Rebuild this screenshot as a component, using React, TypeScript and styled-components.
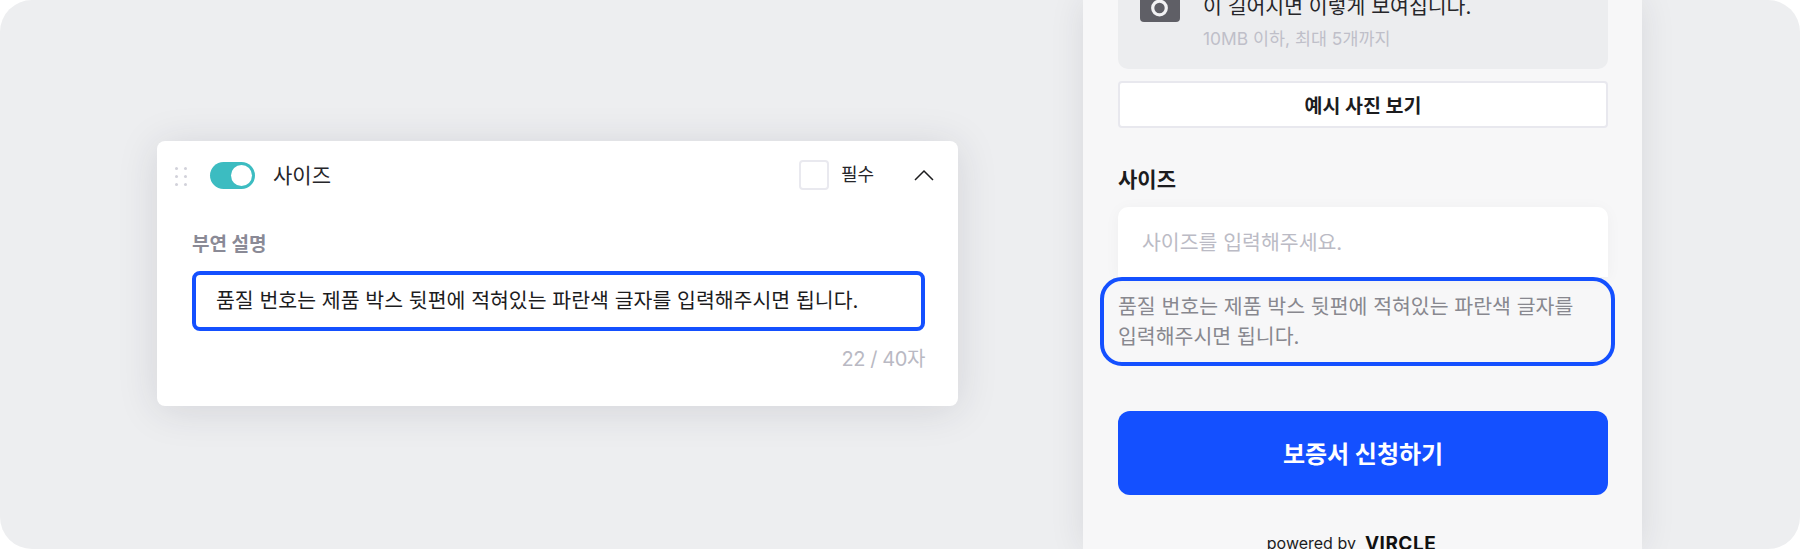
import React from 'react'
import styled, { createGlobalStyle } from 'styled-components'

const GlobalStyle = createGlobalStyle`
  html, body {
    margin: 0;
    padding: 0;
    background: #ffffff;
  }
  * {
    box-sizing: border-box;
  }
  body {
    font-family: Inter, "Noto Sans CJK KR", sans-serif;
    color: #1c1c1e;
  }
`

const dots = [
  [1.5, 1.5],
  [10.5, 1.5],
  [1.5, 9.5],
  [10.5, 9.5],
  [1.5, 17.5],
  [10.5, 17.5],
]

const App = () => {
  return (
    <>
      <GlobalStyle />
      <Stage>
        <Card>
          <CardHeader>
            <DragHandle width="12" height="19" viewBox="0 0 12 19">
              {dots.map(([cx, cy], index) => (
                <circle key={index} cx={cx} cy={cy} r="1.5" fill="#d2d2da" />
              ))}
            </DragHandle>
            <Toggle>
              <Knob />
            </Toggle>
            <FieldName>사이즈</FieldName>
            <Checkbox />
            <RequiredLabel>필수</RequiredLabel>
            <Chevron width="20" height="12" viewBox="0 0 20 12">
              <path d="M1 11 L10 2 L19 11" fill="none" stroke="#1c1c1e" strokeWidth="1.5" />
            </Chevron>
          </CardHeader>
          <CardBody>
            <SubLabel>부연 설명</SubLabel>
            <DescriptionInput>품질 번호는 제품 박스 뒷편에 적혀있는 파란색 글자를 입력해주시면 됩니다.</DescriptionInput>
            <Counter>22 / 40자</Counter>
          </CardBody>
        </Card>

        <Phone>
          <UploadBox>
            <CameraIcon width="40" height="40" viewBox="0 0 40 40">
              <rect x="0" y="0" width="40" height="40" rx="4" fill="#5f5f66" />
              <circle cx="19.5" cy="26" r="6.8" fill="none" stroke="#f2f2f4" strokeWidth="3.2" />
            </CameraIcon>
            <UploadText>
              <UploadTitle>이 길어지면 이렇게 보여집니다.</UploadTitle>
              <UploadHint>10MB 이하, 최대 5개까지</UploadHint>
            </UploadText>
          </UploadBox>
          <ExampleButton>예시 사진 보기</ExampleButton>
          <SectionTitle>사이즈</SectionTitle>
          <SizeInput>사이즈를 입력해주세요.</SizeInput>
          <HelperBox>품질 번호는 제품 박스 뒷편에 적혀있는 파란색 글자를 입력해주시면 됩니다.</HelperBox>
          <SubmitButton>보증서 신청하기</SubmitButton>
          <Footer>
            <PoweredBy>powered by</PoweredBy>
            <Brand>VIRCLE</Brand>
          </Footer>
        </Phone>
      </Stage>
    </>
  )
}

export default App

const Stage = styled.div`
  display: flex;
  align-items: flex-start;
  width: 1800px;
  height: 549px;
  padding-left: 157px;
  background: #edeef0;
  border-radius: 32px;
  overflow: hidden;
`

const Card = styled.section`
  width: 801px;
  height: 265px;
  margin-top: 141px;
  background: #ffffff;
  border-radius: 8px;
  box-shadow: 0 4px 40px rgba(40, 40, 60, 0.13);
`

const CardHeader = styled.div`
  display: flex;
  align-items: center;
  height: 68px;
  padding: 0 24px 0 18px;
`

const DragHandle = styled.svg`
  flex: none;
  margin-top: 2px;
`

const Toggle = styled.div`
  display: flex;
  align-items: center;
  justify-content: flex-end;
  width: 45px;
  height: 27px;
  margin-left: 23px;
  padding-right: 3px;
  background: #3cbcc1;
  border-radius: 14px;
`

const Knob = styled.span`
  width: 21px;
  height: 21px;
  background: #ffffff;
  border-radius: 50%;
`

const FieldName = styled.span`
  margin-left: 18px;
  margin-right: auto;
  padding-top: 1px;
  font-size: 21px;
  line-height: 28px;
  color: #26262a;
`

const Checkbox = styled.span`
  width: 30px;
  height: 30px;
  background: #ffffff;
  border: 2px solid #e9e9ef;
  border-radius: 4px;
`

const RequiredLabel = styled.span`
  margin-left: 12px;
  font-size: 18px;
  line-height: 24px;
  color: #26262a;
`

const Chevron = styled.svg`
  margin-left: 40px;
`

const CardBody = styled.div`
  padding: 24px 33px 0 35px;
`

const SubLabel = styled.div`
  font-size: 19px;
  font-weight: 700;
  line-height: 24px;
  color: #8a8a96;
`

const DescriptionInput = styled.div`
  display: flex;
  align-items: center;
  height: 60px;
  margin-top: 14px;
  padding: 0 0 4px 20px;
  background: #ffffff;
  border: 4px solid #1450ff;
  border-radius: 8px;
  font-size: 20.5px;
  color: #1c1c1e;
  white-space: nowrap;
`

const Counter = styled.div`
  margin-top: 14px;
  font-size: 20px;
  line-height: 28px;
  letter-spacing: -0.4px;
  text-align: right;
  color: #b9b9c3;
`

const Phone = styled.main`
  display: flex;
  flex-direction: column;
  flex: none;
  width: 559px;
  height: 549px;
  margin-left: 125px;
  padding: 0 34px 0 35px;
  background: #f7f7f8;
  box-shadow: 0 0 32px rgba(40, 40, 60, 0.1);
`

const UploadBox = styled.div`
  display: flex;
  align-items: flex-end;
  height: 69px;
  flex: none;
  padding: 0 0 18px 22px;
  background: #ecedef;
  border-radius: 0 0 10px 10px;
  overflow: hidden;
`

const CameraIcon = styled.svg`
  flex: none;
  margin-bottom: 29px;
`

const UploadText = styled.div`
  margin-left: 23px;
`

const UploadTitle = styled.div`
  font-size: 20.5px;
  line-height: 28px;
  white-space: nowrap;
  color: #26262a;
`

const UploadHint = styled.div`
  margin-top: 6px;
  font-size: 17.4px;
  line-height: 24px;
  color: #bfbfc9;
`

const ExampleButton = styled.button`
  flex: none;
  height: 47px;
  margin-top: 12px;
  background: #ffffff;
  border: 2px solid #e8e8ee;
  border-radius: 4px;
  font-family: inherit;
  font-size: 19.5px;
  font-weight: 700;
  color: #1c1c1e;
`

const SectionTitle = styled.h2`
  margin: 38px 0 0;
  font-size: 21px;
  font-weight: 700;
  line-height: 28px;
  color: #1c1c1e;
`

const SizeInput = styled.div`
  display: flex;
  align-items: center;
  flex: none;
  height: 70px;
  margin-top: 13px;
  padding: 0 0 2px 24px;
  background: #ffffff;
  border-radius: 10px 10px 0 0;
  box-shadow: 0 2px 16px rgba(40, 40, 60, 0.04);
  font-size: 20.5px;
  color: #bbbbc5;
`

const HelperBox = styled.div`
  position: relative;
  flex: none;
  height: 89px;
  margin: 0 -7px 0 -18px;
  padding: 11px 30px 0 14px;
  border: 4px solid #1450ff;
  border-radius: 22px;
  font-size: 20.5px;
  line-height: 30px;
  color: #88888f;
`

const SubmitButton = styled.button`
  flex: none;
  height: 84px;
  margin-top: 45px;
  padding: 0 0 2px;
  background: #1450ff;
  border: 0;
  border-radius: 12px;
  font-family: inherit;
  font-size: 24px;
  font-weight: 700;
  color: #ffffff;
`

const Footer = styled.div`
  display: flex;
  align-items: center;
  justify-content: center;
  gap: 9px;
  height: 24px;
  margin-top: 36px;
  padding-right: 23px;
  flex: none;
`

const PoweredBy = styled.span`
  font-size: 16px;
  color: #1c1c1e;
`

const Brand = styled.span`
  font-size: 19px;
  font-weight: 700;
  letter-spacing: 0.5px;
  color: #111111;
`
